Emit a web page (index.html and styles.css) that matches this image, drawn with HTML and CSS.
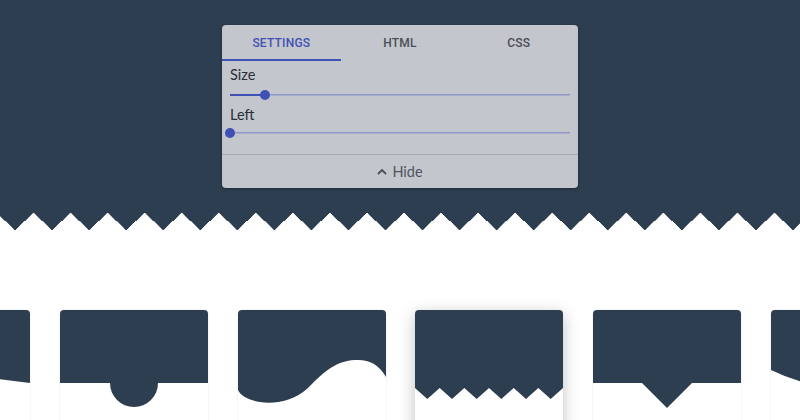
FILE: index.html
```html
<!DOCTYPE html>
<html>
<head>
<meta charset="utf-8">
<link rel="stylesheet" href="styles.css">
</head>
<body>
<header class="hero">
  <div class="panel">
    <nav class="tabs">
      <div class="tab active">SETTINGS</div>
      <div class="tab">HTML</div>
      <div class="tab">CSS</div>
    </nav>
    <div class="settings">
      <div class="label">Size</div>
      <div class="slider"><div class="fill" style="width:10.3%"></div><div class="thumb" style="left:10.3%"></div></div>
      <div class="label label2">Left</div>
      <div class="slider slider2"><div class="fill" style="width:0%"></div><div class="thumb" style="left:0%"></div></div>
    </div>
    <div class="hide">
      <svg class="chev" width="10" height="7" viewBox="0 0 10 7"><polyline points="1,6 5,2 9,6" fill="none" stroke="#4b4f56" stroke-width="1.8"/></svg>
      <span>Hide</span>
    </div>
  </div>
</header>
<div class="zigzag"></div>
<main class="cards">
  <div class="card">
    <svg width="148" height="110" viewBox="0 0 148 110"><polygon points="0,0 148,0 148,73 0,54" fill="#2d3e50"/></svg>
  </div>
  <div class="card">
    <svg width="148" height="110" viewBox="0 0 148 110"><rect x="0" y="0" width="148" height="73" fill="#2d3e50"/><circle cx="74" cy="73" r="24" fill="#2d3e50"/></svg>
  </div>
  <div class="card">
    <svg width="148" height="110" viewBox="0 0 148 110"><path d="M0 0 H148 V67 C141 54 130 49 117 50 C 95 51 82 66 70 78 C 55 92 35 94 22 92 C 10 90 3 86 0 80 Z" fill="#2d3e50"/></svg>
  </div>
  <div class="card raised">
    <svg width="148" height="110" viewBox="0 0 148 110"><polygon points="0,0 148,0 148,78 135.7,89 123.3,78 111,89 98.7,78 86.3,89 74,78 61.7,89 49.3,78 37,89 24.7,78 12.3,89 0,78" fill="#2d3e50"/></svg>
  </div>
  <div class="card">
    <svg width="148" height="110" viewBox="0 0 148 110"><polygon points="0,0 148,0 148,73 99,73 74,98 49,73 0,73" fill="#2d3e50"/></svg>
  </div>
  <div class="card">
    <svg width="148" height="110" viewBox="0 0 148 110"><path d="M0 0 H148 V60 Q74 96 0 60 Z" fill="#2d3e50"/></svg>
  </div>
</main>
</body>
</html>
```

FILE: styles.css
```css
* { box-sizing: border-box; }
html, body { margin: 0; padding: 0; background: #fff; overflow: hidden; }
body { width: 800px; height: 420px; font-family: Lato, "Noto Sans", sans-serif; }

.hero {
  background: #2d3e50;
  height: 213px;
  padding-top: 25px;
}

.panel {
  width: 356px;
  height: 163px;
  margin: 0 auto;
  background: #c3c6cc;
  border-radius: 4px;
  box-shadow: 0 1px 3px rgba(0,0,0,0.35);
  display: flex;
  flex-direction: column;
  overflow: hidden;
}

.tabs { display: flex; height: 36px; }
.tab {
  flex: 1;
  display: flex;
  align-items: center;
  justify-content: center;
  font-family: Roboto, "Liberation Sans", sans-serif;
  font-weight: 500;
  font-size: 12px;
  letter-spacing: 0.2px;
  color: #4a4e55;
  border-bottom: 2px solid transparent;
  padding-top: 2px;
}
.tab.active { color: #3f51b5; border-bottom-color: #3f51b5; }

.settings {
  padding: 5px 8px 0;
  flex: 1;
}
.label {
  font-size: 14.5px;
  line-height: 18px;
  color: #2a2f37;
}
.label2 { margin-top: 5px; }
.slider {
  display: flow-root;
  position: relative;
  height: 12px;
  margin-top: 5px;
  background: linear-gradient(#8f98c9, #8f98c9) 0 50% / 100% 1.5px no-repeat;
}
.slider2 { margin-top: 3px; }
.fill {
  height: 2px;
  margin-top: 5px;
  background: #3f51b5;
}
.thumb {
  position: absolute;
  top: 1px;
  width: 10px;
  height: 10px;
  margin-left: -5px;
  border-radius: 50%;
  background: #3f51b5;
}

.hide {
  height: 34px;
  border-top: 1px solid #a9adb3;
  display: flex;
  align-items: center;
  justify-content: center;
  gap: 5px;
  font-size: 14.5px;
  color: #50545b;
}
.chev { margin-top: -1px; }

.zigzag {
  height: 17px;
  background: conic-gradient(from -47.4deg at 50% 100%, #2d3e50 94.8deg, transparent 0) -3.5px 0 / 37.05px 100% repeat-x;
}

.cards {
  display: flex;
  gap: 29.75px;
  margin-top: 80px;
  margin-left: -118px;
  width: 1100px;
}
.card {
  flex: none;
  width: 148px;
  height: 150px;
  background: #fff;
  border-radius: 4px 4px 0 0;
  overflow: hidden;
  box-shadow: 0 0 1.5px rgba(0,0,0,0.18);
}
.card svg { display: block; }
.card.raised { box-shadow: 0 4px 16px rgba(0,0,0,0.25); }
```
